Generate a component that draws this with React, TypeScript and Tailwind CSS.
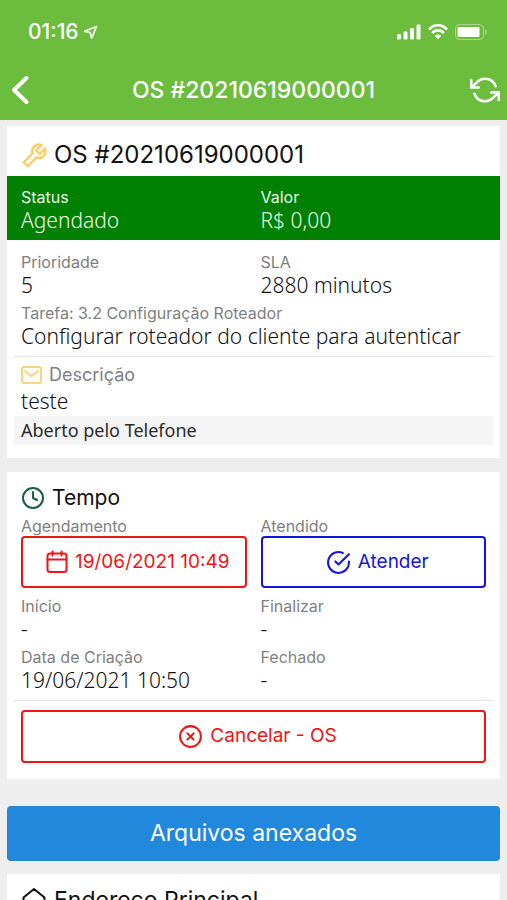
import type { ReactNode } from "react";
import { FiCheckCircle, FiClock, FiRefreshCcw, FiXCircle } from "react-icons/fi";
import { AiOutlineTool } from "react-icons/ai";

function StatusBar() {
  return (
    <div className="flex h-16 items-center justify-between pl-7 pr-5">
      <div className="flex items-center gap-1">
        <span className="text-[21px] font-medium">01:16</span>
        <svg width="15" height="15" viewBox="0 0 15 15" fill="none" stroke="currentColor" strokeWidth="1.700" strokeLinejoin="round" aria-hidden="true">
          <path d="M13.500 1.500 1.600 6.300l5.400 1.200 1.700 5.800z" />
        </svg>
      </div>
      <div className="flex items-center gap-[7px]">
        <svg width="24" height="16" viewBox="0 0 24 16" fill="currentColor" aria-hidden="true">
          <rect x="0" y="10" width="4" height="5.500" rx="1.200" />
          <rect x="6.500" y="7.500" width="4" height="8" rx="1.200" />
          <rect x="13" y="4" width="4" height="11.500" rx="1.200" />
          <rect x="19.500" y="0.500" width="4" height="15" rx="1.200" />
        </svg>
        <svg width="20" height="16" viewBox="0 0 20 16" fill="none" stroke="currentColor" strokeWidth="2.700" aria-hidden="true">
          <path d="M1 5.600C6-.2 14-.2 19 5.600" />
          <path d="M4.200 9.200c3.300-3.700 8.300-3.700 11.600 0" />
          <path d="M6.800 11.900c1.800-2 4.600-2 6.400 0L10 15.300z" fill="currentColor" stroke="none" />
        </svg>
        <svg width="32" height="16" viewBox="0 0 32 16" fill="none" aria-hidden="true">
          <rect x="0.500" y="0.500" width="28" height="15" rx="4" stroke="currentColor" strokeOpacity="0.4" />
          <rect x="2.500" y="3" width="22" height="10" rx="1" fill="currentColor" />
          <path d="M30.200 5.300c2 .8 2 4.600 0 5.400z" fill="currentColor" fillOpacity="0.5" />
        </svg>
      </div>
    </div>
  );
}

function MailIcon() {
  return (
    <svg width="21" height="18" viewBox="0 0 21 18" fill="none" stroke="#f8d679" strokeWidth="2" strokeLinecap="round" strokeLinejoin="round" aria-hidden="true">
      <rect x="1" y="1" width="19" height="16" rx="2" />
      <path d="m3.700 4.800 6.800 5.400 6.800-5.400" />
    </svg>
  );
}

function CalendarIcon() {
  return (
    <svg width="22" height="24" viewBox="0 0 22 24" fill="none" stroke="currentColor" strokeWidth="2" strokeLinecap="round" strokeLinejoin="round" aria-hidden="true">
      <rect x="1.500" y="3.500" width="19" height="18.500" rx="2.500" />
      <path d="M1.500 9.500h19M6.500 1.500v4M15.500 1.500v4" />
    </svg>
  );
}

function HomeIcon() {
  return (
    <svg width="24" height="26" viewBox="0 0 24 26" fill="none" stroke="currentColor" strokeWidth="2" strokeLinecap="round" strokeLinejoin="round" aria-hidden="true">
      <path d="M1.500 10.500 12 2l10.500 8.500V22a2 2 0 0 1-2 2h-17a2 2 0 0 1-2-2z" />
    </svg>
  );
}

function Card({ children }: { children: ReactNode }) {
  return <section className="bg-white">{children}</section>;
}

function Field({ label, value }: { label: string; value: string }) {
  return (
    <div className="px-[7px]">
      <dt className="text-base leading-5 text-[#808080]">{label}</dt>
      <dd className="font-['Noto_Sans',sans-serif] text-[21px] font-light leading-[26px] text-[#111111]">{value}</dd>
    </div>
  );
}

function HighlightField({ label, value }: { label: string; value: string }) {
  return (
    <div className="px-[7px]">
      <dt className="text-base leading-5">{label}</dt>
      <dd className="font-['Noto_Sans',sans-serif] text-[21px] font-light leading-[26px]">{value}</dd>
    </div>
  );
}

export default function App() {
  return (
    <div className="flex h-screen flex-col overflow-hidden bg-[#eeeeee] font-[Inter,sans-serif] text-[#111111]">
      <header className="shrink-0 bg-[#6cbc3e] text-white">
        <StatusBar />
        <div className="grid h-14 grid-cols-[40px_1fr_40px] items-start">
          <button type="button" aria-label="Voltar" className="flex h-[52px] items-center pl-[11px]">
            <svg width="18" height="30" viewBox="0 0 18 30" fill="none" stroke="currentColor" strokeWidth="4" strokeLinecap="round" strokeLinejoin="round" aria-hidden="true">
              <path d="M15.500 3 3 15l12.500 12" />
            </svg>
          </button>
          <h1 className="text-center text-[23px] font-medium leading-[52px]">OS #20210619000001</h1>
          <button type="button" aria-label="Atualizar" className="flex h-[52px] items-center justify-end pr-[7px]">
            <FiRefreshCcw size={30} strokeWidth={2} />
          </button>
        </div>
      </header>

      <main className="flex min-h-0 flex-1 flex-col overflow-y-auto px-[7px] pt-[6px] [scrollbar-width:none]">
        <div className="shrink-0">
          <Card>
            <h2 className="flex h-[50px] items-center gap-1 pl-3 pt-2 text-2xl">
              <AiOutlineTool size={31} color="#f9cf6b" stroke="#f9cf6b" strokeWidth={16} aria-hidden="true" />
              OS #20210619000001
            </h2>
            <dl className="grid grid-cols-2 bg-[#008000] px-[7px] pb-[7px] pt-[11px] text-[#ecf8ec]">
              <HighlightField label="Status" value="Agendado" />
              <HighlightField label="Valor" value="R$ 0,00" />
            </dl>
            <div className="px-[7px] pb-[13px] pt-3">
              <dl className="grid grid-cols-2 gap-y-[5px] border-b border-[#e4e4e4] pb-[7px]">
                <Field label="Prioridade" value="5" />
                <Field label="SLA" value="2880 minutos" />
                <div className="col-span-2">
                  <Field label="Tarefa: 3.2 Configuração Roteador" value="Configurar roteador do cliente para autenticar" />
                </div>
              </dl>
              <h3 className="flex items-center gap-[7px] px-[7px] pt-[5px] text-lg leading-[26px] text-[#808080]">
                <MailIcon />
                Descrição
              </h3>
              <p className="px-[7px] pb-[2px] font-['Noto_Sans',sans-serif] text-[21px] font-light leading-[26px]">teste</p>
              <p className="bg-[#f5f5f5] px-[7px] font-['Noto_Sans',sans-serif] text-lg leading-[29px] text-[#2b2b2b]">
                Aberto pelo Telefone
              </p>
            </div>
          </Card>

          <div className="mt-[14px]">
            <Card>
              <div className="px-[7px] pb-4">
                <h2 className="flex h-11 items-center gap-[7px] px-[7px] pt-2 text-[21px]">
                  <FiClock size={24} color="#1b5e43" aria-hidden="true" />
                  Tempo
                </h2>
                <div className="grid grid-cols-2">
                  <div className="px-[7px]">
                    <p id="agendamento" className="text-base leading-5 text-[#808080]">Agendamento</p>
                    <button type="button" aria-describedby="agendamento" className="flex h-[52px] w-full items-center justify-center gap-[7px] rounded border-2 border-[#f01414] pl-2 text-[19px] text-[#f01414]">
                      <CalendarIcon />
                      19/06/2021 10:49
                    </button>
                  </div>
                  <div className="px-[7px]">
                    <p id="atendido" className="text-base leading-5 text-[#808080]">Atendido</p>
                    <button type="button" aria-describedby="atendido" className="flex h-[52px] w-full items-center justify-center gap-[7px] rounded border-2 border-[#1414e0] pl-2 text-[19px] text-[#1414e0]">
                      <FiCheckCircle size={25} aria-hidden="true" />
                      Atender
                    </button>
                  </div>
                </div>
                <dl className="grid grid-cols-2 gap-y-[5px] border-b border-[#e9e1e1] pb-[7px] pt-2">
                  <Field label="Início" value="-" />
                  <Field label="Finalizar" value="-" />
                  <Field label="Data de Criação" value="19/06/2021 10:50" />
                  <Field label="Fechado" value="-" />
                </dl>
                <div className="px-[7px] pt-[9px]">
                  <button type="button" className="flex h-[53px] w-full items-center justify-center gap-[7px] rounded border-2 border-[#f01414] pl-2 text-[19px] text-[#f01414]">
                    <FiXCircle size={25} aria-hidden="true" />
                    Cancelar - OS
                  </button>
                </div>
              </div>
            </Card>
          </div>

          <button type="button" className="mt-[27px] flex h-[55px] w-full items-center justify-center rounded bg-[#2188dc] text-[23px] text-white">
            Arquivos anexados
          </button>

          <div className="mt-[13px]">
            <Card>
              <h2 className="flex h-[52px] items-center gap-2 pl-[15px] text-[23px]">
                <HomeIcon />
                Endereço Principal
              </h2>
            </Card>
          </div>
        </div>
      </main>
    </div>
  );
}
